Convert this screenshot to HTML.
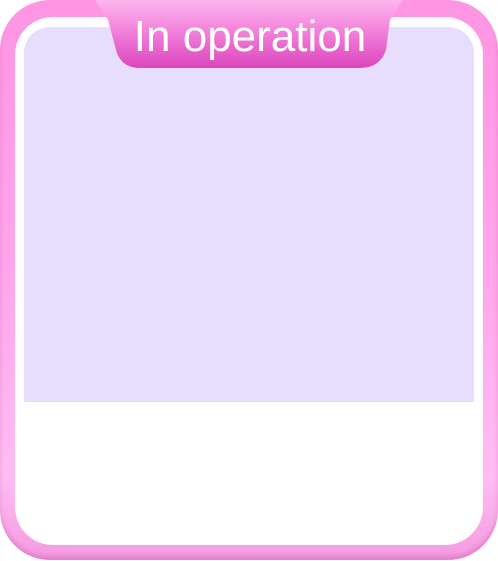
<!DOCTYPE html>
<html><head><style>
html,body{margin:0;padding:0;background:#fff;width:498px;height:561px;overflow:hidden}
.frame{position:absolute;left:0;top:0;width:498px;height:560px;border-radius:50px;background:linear-gradient(#ff95e3,#ffa6ec 50%,#ffbdf3 85%,#f39be0);box-shadow:inset 0 -4px 4px rgba(200,80,170,.35)}
.inner{position:absolute;left:15px;top:17px;width:468px;height:528px;border-radius:38px;background:#fff}
.lav{position:absolute;left:24px;top:27px;width:450px;height:375px;border-radius:26px 26px 0 0;background:#e7defe}
svg{position:absolute;left:0;top:0}
.t{position:absolute;left:50px;width:400px;top:15px;line-height:44px;text-align:center;color:#fff;font:44px/44px "Liberation Sans",sans-serif}
</style></head><body>
<div class="frame"></div><div class="inner"></div><div class="lav"></div>
<svg width="498" height="80"><defs><linearGradient id="g" x1="0" y1="0" x2="0" y2="1"><stop offset="0" stop-color="#fdb6ee"/><stop offset=".35" stop-color="#f68ee0"/><stop offset="1" stop-color="#dc45bd"/></linearGradient></defs>
<path d="M95 0 H403 L390 20 L386 50 Q380 68 360 68 H140 Q121 68 116 50 L108 20 Z" fill="url(#g)"/></svg>
<div class="t">In operation</div>
</body></html>
